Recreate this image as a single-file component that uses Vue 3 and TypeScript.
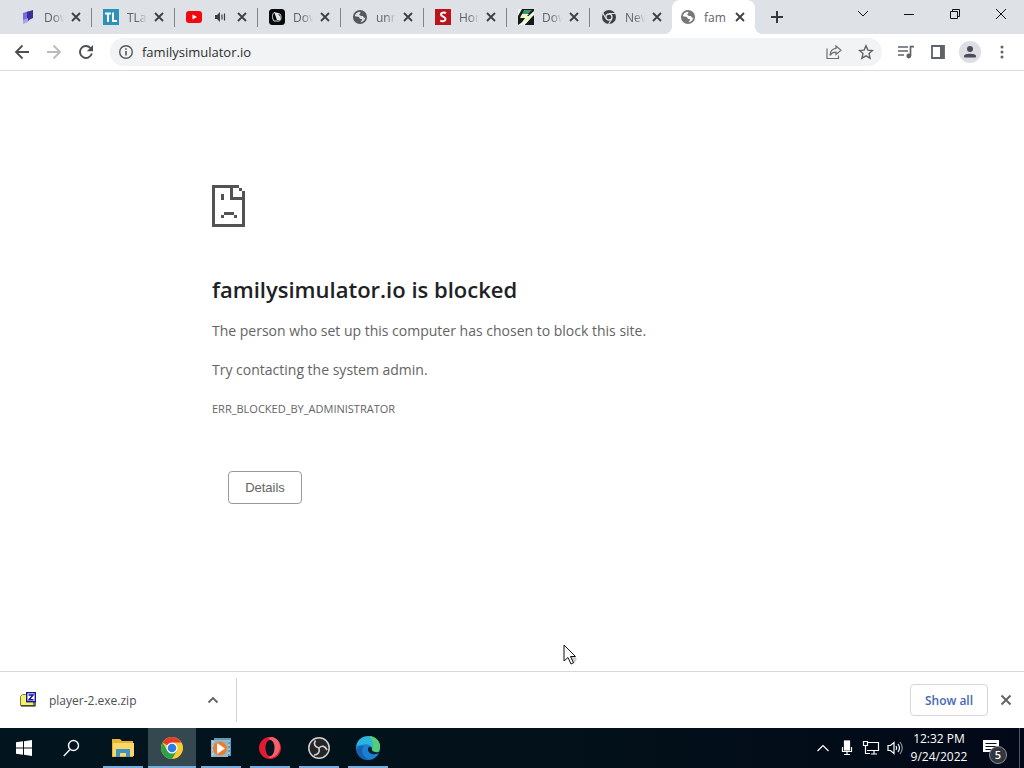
<script setup lang="ts">
import { ref } from 'vue'

type TabIcon = 'book' | 'tl' | 'tube' | 'dark' | 'globe' | 's' | 'bolt' | 'chrome'

interface Tab {
  icon: TabIcon
  title: string
  audio?: boolean
  active?: boolean
}

const tabs: Tab[] = [
  { icon: 'book', title: 'Dow' },
  { icon: 'tl', title: 'TLa' },
  { icon: 'tube', title: '', audio: true },
  { icon: 'dark', title: 'Dow' },
  { icon: 'globe', title: 'unr' },
  { icon: 's', title: 'Hor' },
  { icon: 'bolt', title: 'Dow' },
  { icon: 'chrome', title: 'New' },
  { icon: 'globe', title: 'fam', active: true },
]

const address = ref('familysimulator.io')
</script>

<template>
  <div class="screen">
    <header>
      <div class="strip">
        <div class="tabs">
          <div v-for="(tab, i) in tabs" :key="i" class="tab" :class="{ active: tab.active }">
            <button class="pick" :aria-label="tab.title || 'Video'">
              <svg class="fav" viewBox="0 0 16 16" aria-hidden="true">
                <g v-if="tab.icon === 'book'">
                  <path d="M3 4l6-2v10l-6 2z" fill="#7a6ae0" />
                  <path d="M7 3l6-2v8l-6 3z" fill="#3a3097" />
                  <path d="M3 11l5-2v4l-5 2z" fill="#a9a4ee" />
                </g>
                <g v-else-if="tab.icon === 'tl'">
                  <rect width="16" height="16" fill="#2b93b8" />
                  <path d="M2 4.500h6M5 4.500V13M10 3.500V12h4" stroke="#fff" stroke-width="2" fill="none" />
                </g>
                <g v-else-if="tab.icon === 'tube'">
                  <rect y="2" width="16" height="12" rx="3" fill="#f00a10" />
                  <path d="M6.500 5.500L11 8l-4.500 2.500z" fill="#fff" />
                </g>
                <g v-else-if="tab.icon === 'dark'">
                  <rect width="16" height="16" rx="3.500" fill="#08090c" />
                  <path d="M5 3.500c-2 1.500-2 6.500 0 8.500h5.500c2-1.500 2-5 .5-7z" fill="none" stroke="#ddd" />
                  <path d="M5.500 4h3l3 4v3H8z" fill="#e6e6e6" />
                </g>
                <g v-else-if="tab.icon === 'globe'">
                  <circle cx="8" cy="8" r="6.200" fill="none" stroke="currentColor" stroke-width="1.700" />
                  <path d="M2 7l5 1 1 2h2v1l-2 3C4 14 2 11 2 7zM8 2c4 0 6 3 6 6l-2 1-1-2H9L7 5.500 8.500 4z" fill="currentColor" />
                </g>
                <g v-else-if="tab.icon === 's'">
                  <rect width="16" height="16" fill="#b9151b" />
                  <path d="M11 4.200C9 3 5.800 3.500 6 5.700c.2 2 4.500 2 4.500 4.300 0 2.300-3 2.800-5.300 1.500" fill="none" stroke="#fff" stroke-width="2" />
                </g>
                <g v-else-if="tab.icon === 'bolt'">
                  <rect width="16" height="16" fill="#15191c" />
                  <path d="M0 0h4L0 7zM16 2v4L7 16H0l3-2z" fill="#f2f6ee" />
                  <path d="M6 1h8l-4 4H4z" fill="#3a9275" />
                  <path d="M4 5h7L9 7h6L3 15l4-6H2z" fill="#f0f5c4" />
                  <path d="M15 7l1 9H7z" fill="#15191c" />
                </g>
                <g v-else>
                  <circle cx="8" cy="8" r="7" fill="#3c4043" />
                  <circle cx="8" cy="8" r="3" fill="#3c4043" stroke="#dee1e6" stroke-width="1.300" />
                  <path d="M8 4.500h6.500M5 9.500L1.800 4M11 9.500L7.600 15" stroke="#dee1e6" stroke-width="1.200" />
                </g>
              </svg>
              <svg v-if="tab.audio" class="audio" viewBox="0 0 12 12" aria-hidden="true">
                <path d="M1 4h2l3-3v10L3 8H1z" fill="#3c4043" />
                <path d="M8 3.500v5M10.500 2.500v7" stroke="#3c4043" stroke-width="1.200" />
              </svg>
              <span v-else class="title">{{ tab.title }}</span>
            </button>
            <button class="close" aria-label="Close tab">
              <svg width="10" height="10" viewBox="0 0 10 10"><path d="M1 1l8 8M9 1L1 9" stroke="#3c4043" stroke-width="1.800" /></svg>
            </button>
          </div>
        </div>
        <button class="new" aria-label="New tab">
          <svg width="14" height="14" viewBox="0 0 14 14"><path d="M7 1v12M1 7h12" stroke="#35383c" stroke-width="2" /></svg>
        </button>
        <div class="window">
          <button aria-label="Search tabs"><svg width="12" height="12" viewBox="0 0 12 12"><path d="M1 3l5 5 5-5" /></svg></button>
          <button aria-label="Minimize"><svg width="12" height="12" viewBox="0 0 12 12"><path d="M1 6.500h10" /></svg></button>
          <button aria-label="Restore"><svg width="12" height="12" viewBox="0 0 12 12"><path d="M1.500 3.500h7v7h-7zM3.500 3.500v-2h7v7h-2" /></svg></button>
          <button aria-label="Close"><svg width="12" height="12" viewBox="0 0 12 12"><path d="M1 1l10 10M11 1L1 11" /></svg></button>
        </div>
      </div>

      <div class="toolbar">
        <button aria-label="Back">
          <svg viewBox="0 0 16 16"><path d="M15 8H2M8.500 1.500L2 8l6.500 6.500" fill="none" stroke="#4c4f54" stroke-width="1.800" /></svg>
        </button>
        <button aria-label="Forward">
          <svg viewBox="0 0 16 16"><path d="M1 8h13M7.500 1.500L14 8l-6.500 6.500" fill="none" stroke="#b9bbbe" stroke-width="1.800" /></svg>
        </button>
        <button aria-label="Reload">
          <svg viewBox="0 0 16 16">
            <path d="M13.800 9.500a6 6 0 1 1-1.500-5.700L14 5.500" fill="none" stroke="#4c4f54" stroke-width="1.900" />
            <path d="M15 1v6.200H8.800z" fill="#4c4f54" />
          </svg>
        </button>
        <div class="omnibox">
          <svg viewBox="0 0 16 16" aria-hidden="true">
            <circle cx="8" cy="8" r="6.300" fill="none" stroke="#54575c" stroke-width="1.400" />
            <path d="M8 7v4.500M8 4.300v1.500" stroke="#54575c" stroke-width="1.600" />
          </svg>
          <input v-model="address" aria-label="Address" type="text" spellcheck="false" />
          <button aria-label="Share">
            <svg viewBox="0 0 16 16" fill="none" stroke="#6b6f74" stroke-width="1.200">
              <path d="M1 4.500V14.500H12.500V11.500" />
              <path d="M10 2l5 4.300-5 4.200V8.200C7.500 8.200 5.500 9 4 11.300 4.300 7.500 6.500 4.800 10 4.400z" />
            </svg>
          </button>
          <button aria-label="Bookmark">
            <svg viewBox="0 0 16 16"><path d="M8 1.800l1.900 4.300 4.600.4L11 9.600l1.100 4.600L8 11.800l-4.100 2.400L5 9.600 1.500 6.500l4.600-.4z" fill="none" stroke="#5f6368" stroke-width="1.400" /></svg>
          </button>
        </div>
        <button aria-label="Media controls">
          <svg viewBox="0 0 16 16">
            <path d="M0 3h10M0 7h10M0 11h6M12.500 12V2.700H16" fill="none" stroke="#5f6368" stroke-width="1.700" />
            <circle cx="10.800" cy="12" r="2.400" fill="#5f6368" />
          </svg>
        </button>
        <button aria-label="Side panel">
          <svg viewBox="0 0 16 16"><path d="M2 2h12v12H2z" fill="none" stroke="#5f6368" stroke-width="1.800" /><path d="M10 2h4v12h-4z" fill="#5f6368" /></svg>
        </button>
        <button class="profile" aria-label="Profile">
          <svg viewBox="0 0 16 16"><circle cx="8" cy="5" r="3" fill="#4a4d57" /><path d="M2 13.500V12c0-3 12-3 12 0v1.500z" fill="#4a4d57" /></svg>
        </button>
        <button aria-label="Menu">
          <svg viewBox="0 0 16 16" fill="#5f6368"><circle cx="8" cy="3" r="1.500" /><circle cx="8" cy="8" r="1.500" /><circle cx="8" cy="13" r="1.500" /></svg>
        </button>
      </div>
    </header>

    <main>
      <div class="message">
        <svg class="sad" viewBox="0 0 33 42" shape-rendering="crispEdges" fill="#535353" aria-hidden="true">
          <path d="M0 0h27v3H3v36h27V6h3v36H0z" />
          <path d="M18 3h3v9h9v3H18zM27 3h3v3h-3zM9 9h3v6H9zM12 27h10v3H12zM9 30h3v3H9zM22 30h3v3h-3z" />
        </svg>
        <h1>familysimulator.io is blocked</h1>
        <p>The person who set up this computer has chosen to block this site.</p>
        <p>Try contacting the system admin.</p>
        <p class="code">ERR_BLOCKED_BY_ADMINISTRATOR</p>
        <button class="details">Details</button>
      </div>
    </main>

    <section class="shelf" aria-label="Downloads">
      <div class="download">
        <button class="file">
          <svg width="16" height="16" viewBox="0 0 16 16" aria-hidden="true">
            <path d="M.5 13.500V4.500l2-2h4v1h7v10z" fill="#f4f26a" stroke="#777936" />
            <path d="M1 14h14V9" fill="none" stroke="#111" stroke-width="1.200" />
            <rect x="6.700" y=".700" width="8.600" height="9" fill="#fff" stroke="#17139a" stroke-width="1.400" />
            <path d="M8.500 3h4.500l-4 4.700h4.500" fill="none" stroke="#17139a" stroke-width="1.500" />
          </svg>
          <span>player-2.exe.zip</span>
        </button>
        <button class="more" aria-label="Download options">
          <svg width="12" height="10" viewBox="0 0 12 10"><path d="M1.500 7.500L6 3l4.500 4.500" fill="none" stroke="#5f6368" stroke-width="1.800" /></svg>
        </button>
      </div>
      <button class="all">Show all</button>
      <button class="dismiss" aria-label="Close downloads">
        <svg width="12" height="12" viewBox="0 0 12 12"><path d="M1.500 1.500l9 9M10.500 1.500l-9 9" stroke="#5f6368" stroke-width="2" /></svg>
      </button>
    </section>

    <footer>
      <button class="app" aria-label="Start">
        <svg width="16" height="16" viewBox="0 0 16 16" fill="#fff"><path d="M0 2.300l7-1v6.200H0zM8 1.200L16 0v7.500H8zM0 8.500h7v6.200l-7-1zM8 8.500h8V16l-8-1.200z" /></svg>
      </button>
      <button class="app" aria-label="Search">
        <svg width="18" height="18" viewBox="0 0 18 18" fill="none" stroke="#f2f6f8" stroke-width="1.500"><circle cx="10.500" cy="6.500" r="5" /><path d="M7 10.500L.8 17" /></svg>
      </button>
      <div class="running">
        <button class="app open" aria-label="File Explorer">
          <svg width="22" height="20" viewBox="0 0 22 20">
            <path d="M0 1h8l2 2h11v16H0z" fill="#e8b437" />
            <path d="M1 5h21v13H1z" fill="#fbd768" />
            <path d="M4 19v-8h14v8h-4v-4H8v4z" fill="#3f93c4" />
          </svg>
        </button>
        <button class="app open current" aria-label="Chrome">
          <svg width="24" height="24" viewBox="0 0 24 24">
            <circle cx="12" cy="12" r="11" fill="#f8cb31" />
            <path d="M12 12L2.500 6.500A11 11 0 0 1 21.500 6.500H12z" fill="#e33d2e" />
            <path d="M2.500 6.500A11 11 0 0 0 12 23l5-8.500-5 2.500-5-3z" fill="#2ba24c" />
            <circle cx="12" cy="12" r="5.500" fill="#fff" />
            <circle cx="12" cy="12" r="4.300" fill="#2f7ce9" />
          </svg>
        </button>
        <button class="app open" aria-label="Media Player">
          <svg width="20" height="20" viewBox="0 0 20 20">
            <path d="M3 0h17v18H3z" fill="#5d9bb8" />
            <path d="M0 2h17v17H0z" fill="#91b9cc" />
            <path d="M2 3v15M18 2v15" stroke="#d9eaf1" stroke-dasharray="2 2" />
            <circle cx="9" cy="10.500" r="7" fill="#ee7c2c" />
            <path d="M6 5l8 5.500L6 16z" fill="#fff" />
          </svg>
        </button>
        <button class="app open" aria-label="Opera">
          <svg width="24" height="24" viewBox="0 0 24 24">
            <circle cx="12" cy="12" r="11" fill="#e01c30" />
            <path d="M10 2a10 11 0 0 1 0 20c13 1 17-18 4-21z" fill="#f4616a" />
            <ellipse cx="12" cy="12" rx="4.500" ry="8" fill="#04131c" />
          </svg>
        </button>
        <button class="app open" aria-label="OBS Studio">
          <svg width="24" height="24" viewBox="0 0 24 24">
            <circle cx="12" cy="12" r="10.200" fill="#252427" stroke="#d2d2d2" stroke-width="1.500" />
            <g fill="none" stroke="#cfcfcf" stroke-width="1.700">
              <path d="M12 12C8 11 6 8 8.500 4.500" />
              <path d="M12 12c3-3 6-2 8 2" />
              <path d="M12 12c1 4-1 7-5 7" />
            </g>
          </svg>
        </button>
        <button class="app open" aria-label="Edge">
          <svg width="26" height="26" viewBox="0 0 26 26">
            <circle cx="13" cy="13" r="12" fill="#1b80d2" />
            <path d="M1.500 11C3-2 24-2 25 12c0 6-5 7-9 5.500 3-4-1-9-7-8-4 .5-6 1-7.500 1.500z" fill="#2bb4dc" />
            <path d="M14 1c8 0 12 7 11 12-1 5-6 6-9 4.500 3-5 3-11-2-16.500z" fill="#55cf72" />
            <path d="M9 11c-5 7 2 15 9 13-9 3-17-3-16-10 1-3 4-4 7-3z" fill="#1762b0" />
            <path d="M14 12c-2 2-1 6 3 7 3 .5 6 0 8-2-3 .5-9 0-8-3 .3-1.500-1.500-3-3-2z" fill="#05202f" />
          </svg>
        </button>
      </div>

      <div class="tray">
        <button aria-label="Show hidden icons"><svg width="12" height="12" viewBox="0 0 12 12"><path d="M.5 9L6 3.500 11.500 9" /></svg></button>
        <button aria-label="Microphone"><svg width="12" height="16" viewBox="0 0 12 16"><rect x="3.500" y="1" width="5" height="9" fill="#fff" /><path d="M1.500 7v4.500h9V7M6 11.500v3M3 14.500h6" /></svg></button>
        <button aria-label="Network"><svg width="18" height="14" viewBox="0 0 18 14"><path d="M6 1.500h10.500v8H5M9 13h6M12 10v3M1.500.500h4v4h-4zM3.500 4.500v8H8" /></svg></button>
        <button aria-label="Volume"><svg width="16" height="14" viewBox="0 0 16 14"><path d="M1 4.500h2.500L7 1.500v11l-3.500-3H1zM9 5q1.500 2 0 4M11 3q3 4 0 8" /><path d="M13 1q4.500 6 0 12" stroke="#8a929c" /></svg></button>
        <button class="clock"><span>12:32 PM</span><span>9/24/2022</span></button>
        <button class="notes" aria-label="5 notifications">
          <svg width="16" height="16" viewBox="0 0 16 16"><path d="M0 0h16v12h-4v4l-4-4H0z" fill="#fff" stroke="none" /><path d="M2.500 3.500h11M2.500 6.500h11M2.500 9.500h7" stroke="#04131c" /></svg>
          <span class="count">5</span>
        </button>
      </div>
    </footer>

    <svg class="pointer" width="16" height="22" viewBox="0 0 16 22" aria-hidden="true">
      <path d="M2 4l12 11-3 5z" fill="#000" opacity=".2" />
      <path d="M1 1v16l4-3.500 3 6.500 2.500-1.200-3-6.300H12.500z" fill="#fff" stroke="#111" />
    </svg>
  </div>
</template>

<style>
body {
  margin: 0;
}
</style>

<style scoped>
.screen {
  display: flex;
  flex-direction: column;
  min-height: 100vh;
  position: relative;
  background: #fff;
  color: #3c4043;
  font-family: "Open Sans", "Noto Sans", sans-serif;
  font-size: 12px;
}
button {
  display: flex;
  align-items: center;
  justify-content: center;
  flex: none;
  margin: 0;
  padding: 0;
  border: 0;
  background: none;
  color: inherit;
  font: inherit;
}
svg {
  display: block;
  flex: none;
}
.strip {
  display: flex;
  height: 34px;
  padding-left: 8px;
  background: #dee1e6;
}
.tabs {
  display: flex;
}
.tab {
  display: flex;
  align-items: center;
  box-sizing: border-box;
  width: 83px;
  padding: 0 8px 0 12px;
  position: relative;
}
.tab:not(.active)::after {
  content: "";
  position: absolute;
  right: -1px;
  top: 8px;
  width: 1px;
  height: 19px;
  background: #808388;
}
.tab:nth-last-child(2)::after {
  display: none;
}
.tab.active {
  padding-left: 8px;
  background: #fff;
  border-radius: 8px 8px 0 0;
}
.active .fav {
  color: #74777b;
}
.active::before,
.active::after {
  content: "";
  position: absolute;
  bottom: 0;
  width: 8px;
  height: 8px;
}
.active::before {
  left: -8px;
  background: radial-gradient(circle at 0 0, #dee1e6 8px, #fff 8px);
}
.active::after {
  right: -8px;
  background: radial-gradient(circle at 100% 0, #dee1e6 8px, #fff 8px);
}
.pick {
  flex: 1;
  justify-content: flex-start;
  min-width: 0;
  gap: 8px;
  height: 34px;
}
.fav {
  width: 16px;
  height: 16px;
  color: #54575c;
}
.audio {
  width: 12px;
  height: 12px;
  margin-left: 4px;
}
.title {
  width: 20px;
  overflow: hidden;
  white-space: nowrap;
  text-align: left;
  color: #5f6368;
  mask-image: linear-gradient(to right, #000 50%, transparent);
}
.active .title {
  width: 24px;
  mask-image: none;
}
.close {
  width: 14px;
  height: 16px;
}
.new {
  width: 28px;
  margin-left: 8px;
}
.window {
  display: flex;
  height: 28px;
  margin-left: auto;
}
.window button {
  width: 46px;
}
.window svg {
  fill: none;
  stroke: #111;
}
.toolbar {
  display: flex;
  align-items: center;
  height: 36px;
  padding: 0 6px;
  border-bottom: 1px solid #dadce0;
}
.toolbar button {
  width: 32px;
  height: 28px;
}
.toolbar svg {
  width: 16px;
  height: 16px;
}
.omnibox {
  display: flex;
  align-items: center;
  flex: 1;
  min-width: 0;
  height: 28px;
  margin: 0 8px;
  padding-left: 8px;
  border-radius: 14px;
  background: #f1f3f4;
}
.omnibox input {
  flex: 1;
  min-width: 0;
  height: 20px;
  margin-left: 8px;
  padding: 0;
  border: 0;
  outline: 0;
  background: none;
  color: #2c2f33;
  font: inherit;
  font-size: 13px;
}
.profile svg {
  padding: 3px;
  border-radius: 50%;
  background: #dcdee4;
}
main {
  flex: 1;
  padding: 114px 24px 24px;
}
.message {
  max-width: 600px;
  margin: 0 auto;
  color: #646464;
}
.sad {
  width: 33px;
  height: 42px;
  margin-bottom: 46px;
}
h1 {
  margin: 0 0 14px;
  color: #202124;
  font-size: 22px;
  font-weight: 600;
  line-height: 32px;
}
p {
  margin: 0 0 15px;
  font-size: 14px;
  line-height: 24px;
}
.code {
  font-size: 11px;
}
.details {
  width: 74px;
  height: 33px;
  margin: 50px 16px 0;
  border: 1px solid #9a9a9a;
  border-radius: 4px;
  font-family: "Liberation Sans", Arial, sans-serif;
  font-size: 13px;
}
.shelf {
  display: flex;
  align-items: center;
  height: 56px;
  border-top: 1px solid #d5d7da;
}
.download {
  display: flex;
  box-sizing: border-box;
  width: 237px;
  height: 44px;
  padding: 0 11px 0 20px;
  border-right: 1px solid #d0d2d5;
}
.file {
  flex: 1;
  justify-content: flex-start;
  gap: 13px;
  color: #4b4e53;
}
.more {
  width: 24px;
}
.all {
  width: 78px;
  height: 32px;
  margin-left: auto;
  border: 1px solid #d5d7db;
  border-radius: 4px;
  color: #4568b4;
  font-weight: 600;
}
.dismiss {
  width: 36px;
  height: 32px;
}
footer {
  display: flex;
  height: 40px;
  background: linear-gradient(to right, #02151e, #021019 60%, #020818);
  color: #fff;
}
.running {
  display: flex;
  gap: 1px;
  margin-left: 3px;
}
.app {
  width: 48px;
  position: relative;
}
.open::after {
  content: "";
  position: absolute;
  left: 4px;
  right: 4px;
  bottom: 0;
  height: 2px;
  background: #78aede;
}
.current {
  background: #35474f;
}
.current::after {
  left: 0;
  right: 0;
}
.tray {
  display: flex;
  margin-left: auto;
  margin-right: 4px;
  border-right: 1px solid #495561;
}
.tray button {
  width: 24px;
}
.tray svg {
  fill: none;
  stroke: #fff;
  stroke-width: 1.2;
}
.tray .clock {
  flex-direction: column;
  width: 64px;
  line-height: 18px;
}
.tray .notes {
  justify-content: flex-start;
  width: 48px;
  padding-left: 12px;
  position: relative;
}
.count {
  position: absolute;
  left: 18px;
  top: 18px;
  width: 16px;
  height: 16px;
  border: 1px solid #8c9097;
  border-radius: 50%;
  background: #33363c;
  font-size: 11px;
  font-weight: 600;
  line-height: 16px;
  text-align: center;
}
.pointer {
  position: absolute;
  left: 563px;
  top: 644px;
}
</style>
